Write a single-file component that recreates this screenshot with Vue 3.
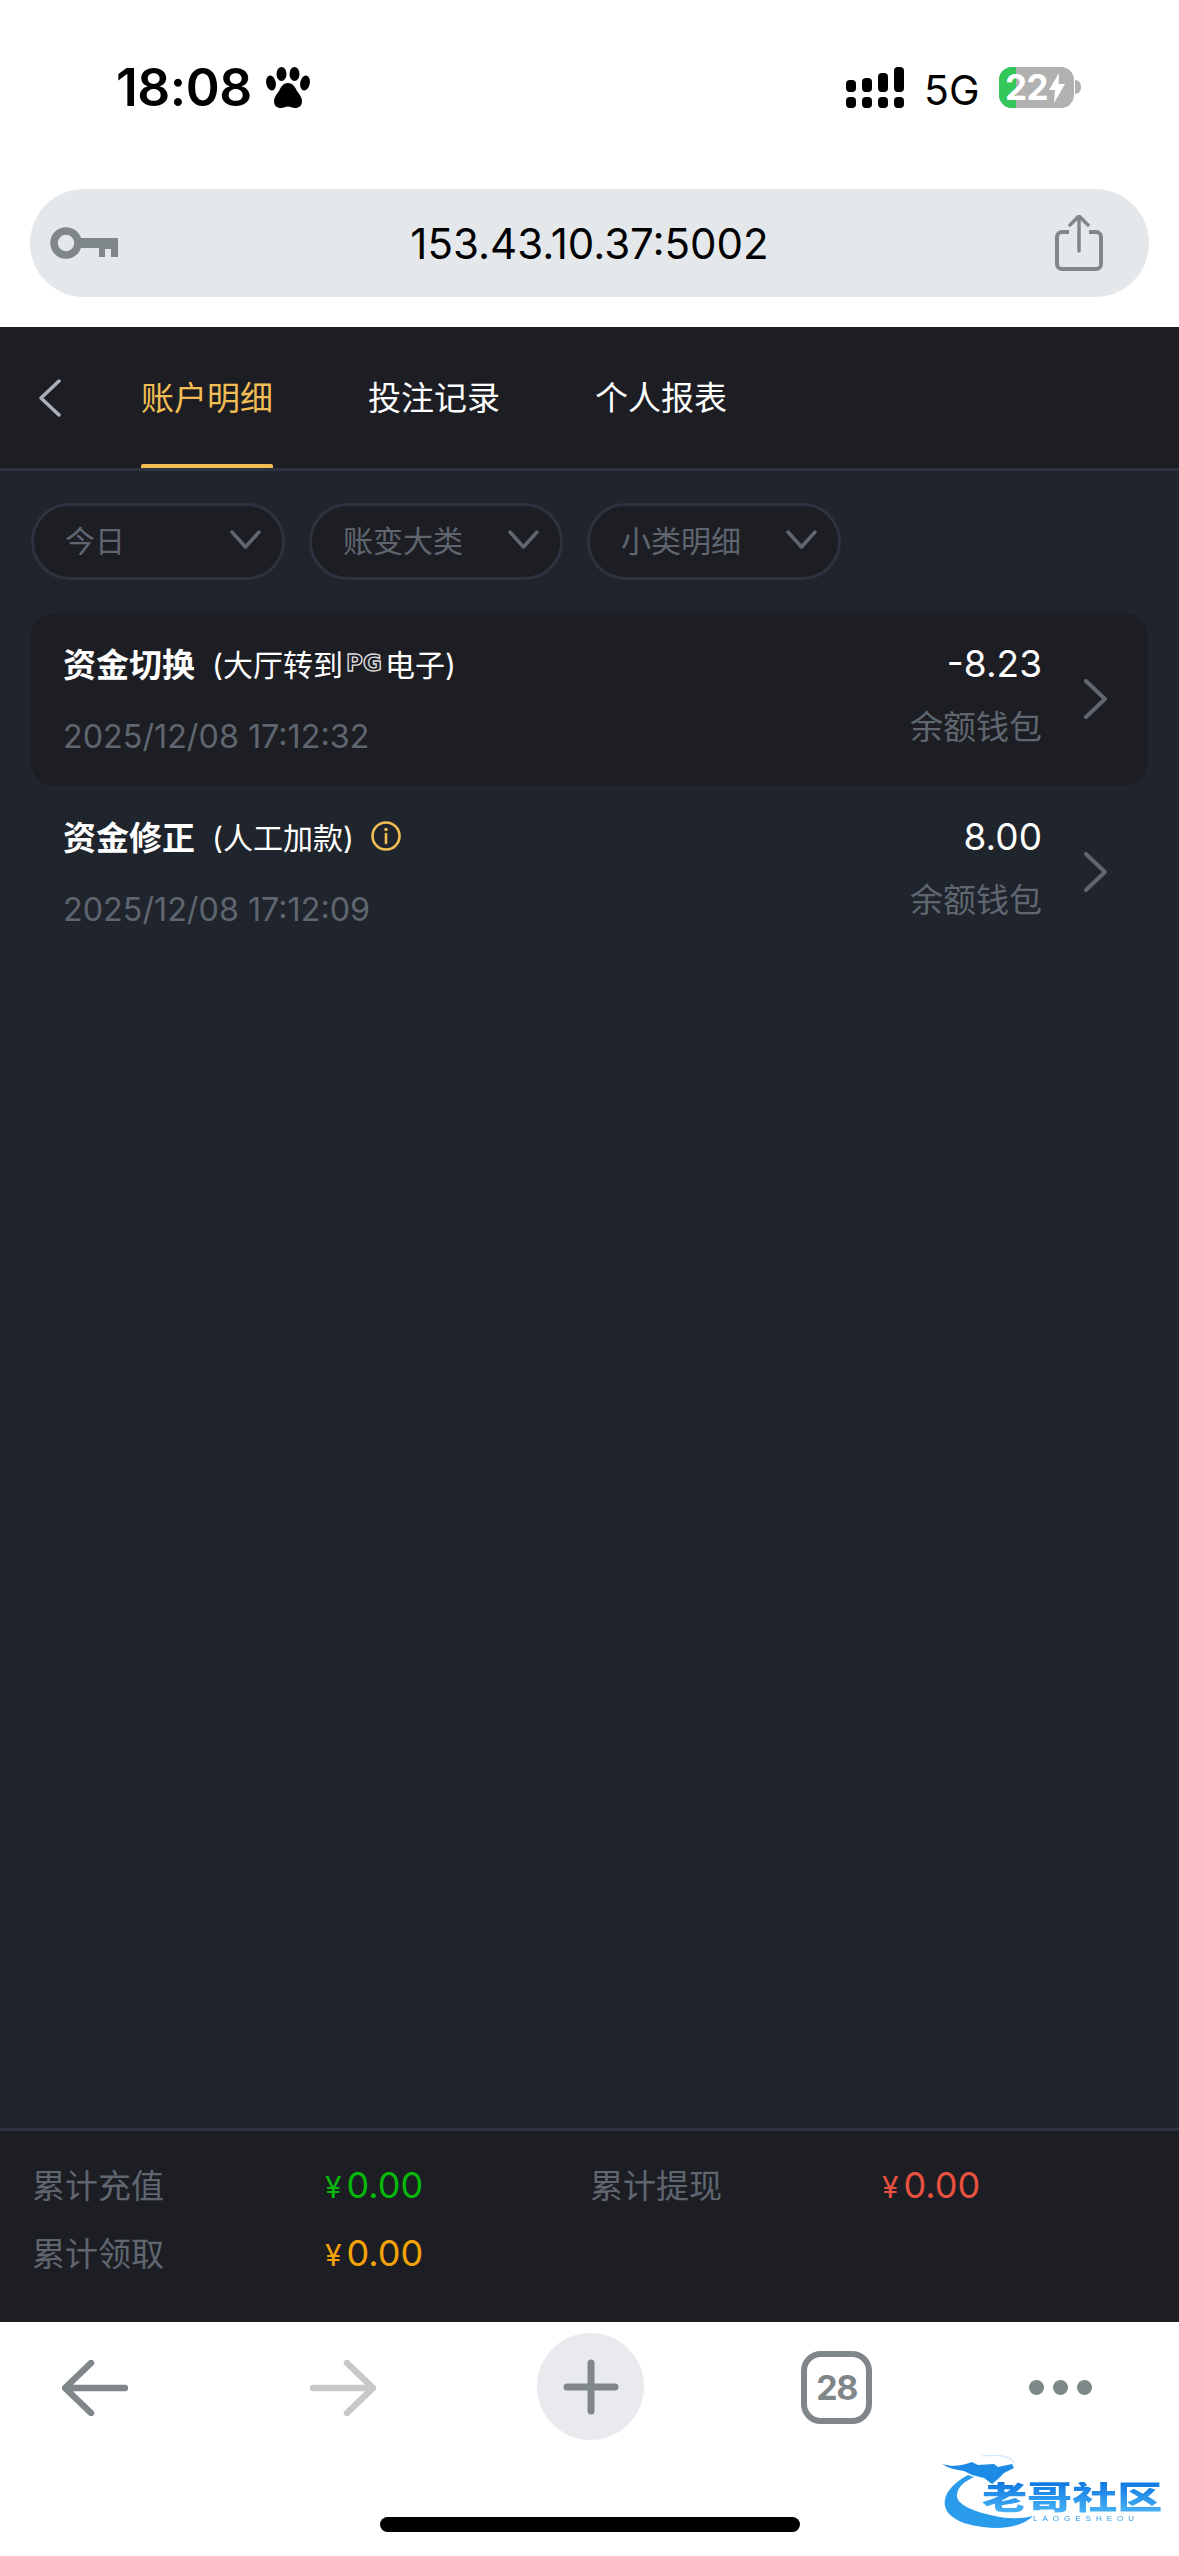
<template>
  <div class="page">
    <div class="status-bar">
      <div class="time">18:08</div>
      <svg class="paw" viewBox="0 0 44 41" fill="#000">
        <ellipse cx="5" cy="16" rx="4.800" ry="7.500" transform="rotate(-10 5 16)" />
        <ellipse cx="15.500" cy="7" rx="5" ry="7" />
        <ellipse cx="28.500" cy="7" rx="5" ry="7" />
        <ellipse cx="39" cy="16" rx="4.800" ry="7.500" transform="rotate(10 39 16)" />
        <path d="M22 16c-5 0-7 4-9 8-3 4-5 7-5 10 0 5 3 7 7 7 3 0 4.500-1.500 7-1.500s4 1.500 7 1.500c4 0 7-2 7-7 0-3-2-6-5-10-2-4-4-8-9-8z" />
      </svg>
      <div class="status-right">
        <svg class="signal" viewBox="0 0 58 41" fill="#000">
          <rect x="0" y="13" width="10" height="12" rx="4" />
          <rect x="16" y="11" width="10" height="14" rx="4" />
          <rect x="32" y="6" width="10" height="19" rx="4" />
          <rect x="48" y="0" width="10" height="25" rx="4" />
          <rect x="0" y="30" width="10" height="11" rx="4" />
          <rect x="16" y="30" width="10" height="11" rx="4" />
          <rect x="32" y="30" width="10" height="11" rx="4" />
          <rect x="48" y="30" width="10" height="11" rx="4" />
        </svg>
        <div class="net">5G</div>
        <div class="battery">
          <div class="battery-fill"></div>
          <span class="battery-num">22</span>
          <svg class="bolt" viewBox="0 0 16 30" fill="#fff">
            <path d="M10 0 0 17h6l-1 13L16 11H9.500z" />
          </svg>
        </div>
        <div class="battery-nub"></div>
      </div>
    </div>

    <div class="address-wrap">
      <div class="address">
        <svg class="key" viewBox="0 0 68 34">
          <circle cx="16" cy="17" r="12" fill="none" stroke="#7f8789" stroke-width="7.500" />
          <path d="M30 12h38v19h-7v-8h-6v8h-6V22H30z" fill="#7f8789" />
        </svg>
        <div class="url">153.43.10.37:5002</div>
        <svg class="share" viewBox="0 0 48 56" fill="none" stroke="#7f8789">
          <path d="M14 17H7a5 5 0 0 0-5 5v27a5 5 0 0 0 5 5h34a5 5 0 0 0 5-5V22a5 5 0 0 0-5-5h-7" stroke-width="4" />
          <path d="M24 36V2M15 10l9-9 9 9" stroke-width="3.500" stroke-linecap="round" stroke-linejoin="round" />
        </svg>
      </div>
    </div>

    <div class="app">
      <div class="tabs">
        <svg class="back" viewBox="0 0 23 38" fill="none" stroke="#a9b0ba" stroke-width="3.500" stroke-linecap="round" stroke-linejoin="round">
          <path d="M21 2 3 19l18 17" />
        </svg>
        <div v-for="(t, i) in tabs" :key="t" class="tab" :class="{ active: i === 0 }">{{ t }}</div>
      </div>

      <div class="filters">
        <div v-for="f in filters" :key="f" class="pill">
          <span class="pill-text">{{ f }}</span>
          <svg class="pill-arrow" viewBox="0 0 31 19" fill="none" stroke="#5f6670" stroke-width="3.500" stroke-linecap="round" stroke-linejoin="round">
            <path d="M2 2l13.500 15L29 2" />
          </svg>
        </div>
      </div>

      <div class="list">
        <div class="row row-on">
          <div class="row-left">
            <div class="row-title">
              <b>资金切换</b>
              <span class="sub">(大厅转到<span class="pg">PG</span>电子)</span>
            </div>
            <div class="row-time">2025/12/08 17:12:32</div>
          </div>
          <div class="row-right">
            <div class="amount">-8.23</div>
            <div class="wallet">余额钱包</div>
          </div>
          <svg class="row-arrow" viewBox="0 0 25 40" fill="none" stroke="#5f6670" stroke-width="4" stroke-linecap="round" stroke-linejoin="round">
            <path d="M3 2l19 18L3 38" />
          </svg>
        </div>
        <div class="row">
          <div class="row-left">
            <div class="row-title">
              <b>资金修正</b>
              <span class="sub">(人工加款)</span>
              <svg class="info" viewBox="0 0 30 30" fill="none" stroke="#f3bd55">
                <circle cx="15" cy="15" r="13.500" stroke-width="2.600" />
                <path d="M15 13v9" stroke-width="2.600" stroke-linecap="round" />
                <circle cx="15" cy="8.500" r="1.800" fill="#f3bd55" stroke="none" />
              </svg>
            </div>
            <div class="row-time">2025/12/08 17:12:09</div>
          </div>
          <div class="row-right">
            <div class="amount">8.00</div>
            <div class="wallet">余额钱包</div>
          </div>
          <svg class="row-arrow" viewBox="0 0 25 40" fill="none" stroke="#5f6670" stroke-width="4" stroke-linecap="round" stroke-linejoin="round">
            <path d="M3 2l19 18L3 38" />
          </svg>
        </div>
      </div>

      <div class="totals">
        <template v-for="s in totals" :key="s.label">
          <div class="total-label">{{ s.label }}</div>
          <div class="total-value" :class="s.cls"><span class="yen">¥</span>{{ s.value }}</div>
        </template>
      </div>
    </div>

    <div class="toolbar">
      <svg class="tool arrow" viewBox="0 0 66 56" fill="none" stroke="#7f8789" stroke-width="6.500" stroke-linecap="round" stroke-linejoin="round">
        <path d="M29 3 3 28l26 25M4 28h59" />
      </svg>
      <svg class="tool arrow fwd" viewBox="0 0 66 56" fill="none" stroke="#c8c8c8" stroke-width="6.500" stroke-linecap="round" stroke-linejoin="round">
        <path d="M37 3l26 25-26 25M62 28H3" />
      </svg>
      <div class="tool plus">
        <svg viewBox="0 0 56 56" fill="none" stroke="#7f8789" stroke-width="7" stroke-linecap="round">
          <path d="M28 4v48M4 28h48" />
        </svg>
      </div>
      <div class="tool count">28</div>
      <div class="tool dots"><i></i><i></i><i></i></div>
    </div>

    <div class="home-bar"></div>

    <div class="watermark">
      <svg class="dragon" viewBox="0 0 220 73" fill="none">
        <path d="M26 20C8 30 1 41 3 51c3 14 24 21 50 22 17 0 30-4 38-12-13 3-26 3-38 0C33 57 15 50 15 41c0-8 6-14 17-19z" fill="#2b9bec" />
        <path d="M0 9c10 3 20 2 30-2l6 3 16-1 4 3 14-3 2 4-10 5-6 6-6 5-8-6-12-3-8-4C14 15 6 13 0 9z" fill="#1c8be6" />
        <path d="M40 1c18-2 30 1 32 7" stroke="#d5e9fa" stroke-width="1.500" />
      </svg>
      <div class="wm-name">老哥社区</div>
      <div class="wm-sub">LAOGESHEOU</div>
    </div>
  </div>
</template>

<script setup>
const tabs = ['账户明细', '投注记录', '个人报表']
const filters = ['今日', '账变大类', '小类明细']
const totals = [
  { label: '累计充值', value: '0.00', cls: 'green' },
  { label: '累计提现', value: '0.00', cls: 'red' },
  { label: '累计领取', value: '0.00', cls: 'orange' }
]
</script>

<style>
html, body { margin: 0; background: #fff; }
</style>

<style scoped>
.page {
  position: relative;
  width: 1179px;
  height: 2556px;
  overflow: hidden;
  display: flex;
  flex-direction: column;
  background: #fff;
  font-family: Inter, "Noto Sans CJK SC", sans-serif;
}

.status-bar {
  height: 189px;
  box-sizing: border-box;
  padding: 67px 98px 0 116px;
  display: flex;
  align-items: flex-start;
}
.time {
  font-size: 51.500px;
  line-height: 41px;
  font-weight: 600;
  letter-spacing: -0.5px;
  color: #000;
  width: 150px;
}
.paw { width: 44px; height: 41px; }
.status-right {
  margin-left: auto;
  display: flex;
  align-items: flex-start;
}
.signal { width: 58px; height: 41px; }
.net {
  margin-left: 20px;
  font-size: 41px;
  line-height: 41px;
  margin-top: 3px;
  color: #000;
  width: 55px;
}
.battery {
  position: relative;
  margin-left: 20px;
  width: 75px;
  height: 41px;
  border-radius: 13px;
  background: #b1b1b1;
  overflow: hidden;
  display: flex;
  align-items: center;
  padding-left: 6px;
  box-sizing: border-box;
}
.battery-fill {
  position: absolute;
  left: 0;
  top: 0;
  bottom: 0;
  width: 17px;
  background: #34c759;
}
.battery-num {
  position: relative;
  font-size: 35px;
  line-height: 41px;
  font-weight: 700;
  letter-spacing: -0.5px;
  color: #fff;
}
.bolt { position: relative; width: 16px; height: 30px; margin-left: 1px; }
.battery-nub {
  width: 6px;
  height: 14px;
  margin: 13px 0 0 1px;
  background: #b1b1b1;
  border-radius: 0 7px 7px 0;
}

.address-wrap { height: 138px; padding: 0 30px; }
.address {
  height: 108px;
  border-radius: 54px;
  background: #e5e8eb;
  display: flex;
  align-items: center;
  padding: 0 46px 0 20px;
}
.key { width: 68px; height: 34px; }
.url {
  flex: 1;
  text-align: center;
  font-size: 42px;
  color: #000;
  padding-left: 6px;
}
.share { width: 48px; height: 56px; }

.app {
  height: 1995px;
  display: flex;
  flex-direction: column;
  background: #20242c;
}
.tabs {
  height: 141px;
  flex: none;
  background: #1d1e23;
  border-bottom: 3px solid #2d333e;
  display: flex;
  align-items: stretch;
  padding-left: 38px;
}
.back { width: 23px; height: 38px; margin: 52px 80px 0 0; }
.tab {
  position: relative;
  margin-right: 95px;
  font-size: 33px;
  line-height: 143px;
  height: 141px;
  color: #fff;
  white-space: nowrap;
}
.tab.active { color: #f3bd55; }
.tab.active::after {
  content: "";
  position: absolute;
  left: 0;
  right: 0;
  bottom: 0;
  height: 4px;
  background: #f3bd55;
  border-radius: 2px 2px 0 0;
}

.filters {
  display: flex;
  gap: 24px;
  padding: 32px 31px 33px;
}
.pill {
  width: 254px;
  height: 77px;
  box-sizing: border-box;
  border: 3px solid #2d333e;
  border-radius: 39px;
  background: #1d1e23;
  display: flex;
  align-items: center;
  justify-content: space-between;
  padding: 0 21px 0 31px;
  font-size: 30px;
  color: #5f6670;
}
.pill-text { margin-top: -5px; }
.pill-arrow { width: 31px; height: 19px; margin-top: -5px; }

.list { flex: 1; padding: 0 31px; }
.row {
  height: 173px;
  box-sizing: border-box;
  padding: 30px 40px 0 32px;
  display: flex;
  align-items: flex-start;
  border-radius: 24px;
}
.row-on { background: #1d1e23; }
.row-left { flex: 1; }
.row-title {
  display: flex;
  align-items: center;
  height: 42px;
  margin-top: -1px;
  color: #fff;
  white-space: nowrap;
}
.row-title b { font-size: 33px; font-weight: 700; }
.sub { font-size: 30px; margin-left: 17px; display: inline-flex; align-items: center; }
.pg {
  font-family: "DejaVu Sans", sans-serif;
  font-size: 23px;
  font-weight: 700;
  color: #1d1e23;
  -webkit-text-stroke: 1.400px #dcdcdc;
  width: 42px;
  text-align: center;
}
.info { width: 30px; height: 30px; margin-left: 17px; }
.row-time {
  margin-top: 32px;
  font-size: 32.300px;
  line-height: 42px;
  color: #5f6670;
}
.row-right { text-align: right; margin-right: 41px; }
.amount { font-size: 37px; line-height: 42px; color: #fff; }
.wallet { margin-top: 21px; font-size: 33px; line-height: 42px; color: #5f6670; }
.row-arrow { width: 25px; height: 40px; margin-top: 36px; }

.totals {
  flex: none;
  height: 194px;
  box-sizing: border-box;
  border-top: 3px solid #2d333e;
  background: #1d1e23;
  padding: 20px 0 0 32px;
  display: grid;
  grid-template-columns: 293px 265px 292px 1fr;
  grid-auto-rows: 68px;
  align-items: center;
}
.total-label { font-size: 33px; color: #5f6670; margin-top: -2px; }
.total-value { font-size: 36px; }
.yen { font-size: 30px; margin-right: 5px; }
.green { color: #07b80a; }
.red { color: #e8513f; }
.orange { color: #f5a20a; }

.toolbar {
  flex: none;
  height: 195px;
  box-sizing: border-box;
  padding: 11px 0 0 62px;
  display: flex;
  align-items: flex-start;
}
.tool { flex: none; }
.arrow { width: 66px; height: 56px; margin-top: 27px; }
.fwd { margin-left: 182px; }
.plus {
  width: 107px;
  height: 107px;
  margin-left: 161px;
  border-radius: 50%;
  background: #e9eaee;
  display: flex;
  align-items: center;
  justify-content: center;
}
.plus svg { width: 56px; height: 56px; }
.count {
  width: 71px;
  height: 73px;
  margin: 18px 0 0 157px;
  box-sizing: border-box;
  border: 6px solid #7f8789;
  border-radius: 20px;
  display: flex;
  align-items: center;
  justify-content: center;
  font-size: 34px;
  font-weight: 700;
  letter-spacing: -1.500px;
  color: #7f8789;
}
.dots {
  display: flex;
  gap: 9px;
  margin: 47px 0 0 157px;
}
.dots i { width: 15px; height: 15px; border-radius: 50%; background: #7f8789; }

.home-bar {
  width: 420px;
  height: 15px;
  margin-left: 380px;
  border-radius: 8px;
  background: #000;
}

.watermark {
  position: absolute;
  left: 942px;
  top: 2455px;
  width: 220px;
  height: 73px;
  filter: blur(0.6px);
}
.dragon { position: absolute; inset: 0; width: 220px; height: 73px; }
.wm-name {
  position: absolute;
  left: 40px;
  top: 27px;
  font-size: 32px;
  line-height: 32px;
  font-weight: 900;
  white-space: nowrap;
  transform: scaleX(1.410);
  transform-origin: left center;
  background: linear-gradient(#0f78e2, #4ab4f6);
  -webkit-background-clip: text;
  background-clip: text;
  color: transparent;
}
.wm-sub {
  position: absolute;
  left: 91px;
  top: 59px;
  font-family: "Liberation Sans", sans-serif;
  font-size: 8px;
  line-height: 9px;
  letter-spacing: 5px;
  color: #2b9bec;
  white-space: nowrap;
}
</style>
